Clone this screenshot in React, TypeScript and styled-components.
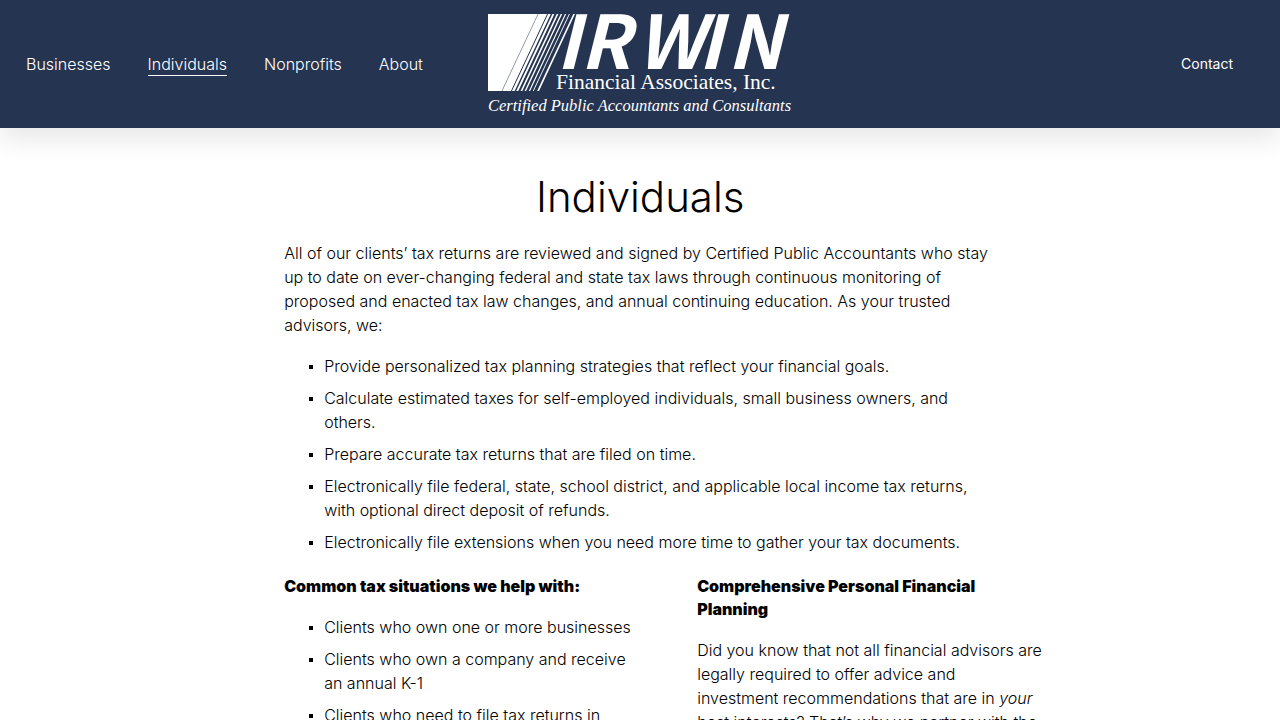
import React from "react";
import styled, { createGlobalStyle } from "styled-components";

const GlobalStyle = createGlobalStyle`
  * { box-sizing: border-box; }
  body {
    margin: 0;
    background: #fff;
    color: #000;
    font-family: Inter, "Liberation Sans", sans-serif;
    font-size: 16px;
    font-weight: 300;
    line-height: 24px;
  }
`;

const Header = styled.header`
  display: grid;
  grid-template-columns: 1fr auto 1fr;
  align-items: center;
  padding: 12px 26px;
  min-height: 128px;
  background: #253451;
  box-shadow: 0 12px 24px rgba(0, 0, 0, 0.09);
`;

const Nav = styled.nav`
  display: flex;
  gap: 37px;
`;

const NavLink = styled.a<{ $active?: boolean }>`
  color: #fff;
  text-decoration: none;
  line-height: 22px;
  border-bottom: 1px solid ${(p) => (p.$active ? "#fff" : "transparent")};
`;

const ContactLink = styled.a`
  justify-self: end;
  margin-right: 21px;
  color: #fff;
  font-size: 14px;
  font-weight: 400;
  line-height: 26px;
  text-decoration: none;
`;

const LogoLink = styled.a`
  display: block;
  svg {
    display: block;
    overflow: visible;
  }
`;

const Content = styled.main`
  max-width: 764px;
  margin-left: 22.2%;
  padding-top: 40px;
`;

const Intro = styled.section`
  max-width: 712px;
`;

const Title = styled.h1`
  margin: 0 0 16px;
  font-size: 42px;
  font-weight: 300;
  line-height: 57px;
  text-align: center;
`;

const Text = styled.p`
  margin: 0 0 17px;
`;

const List = styled.ul`
  margin: 0 0 21px;
  padding: 0 0 0 40px;
  list-style: none;
`;

const Item = styled.li`
  display: flex;
  margin-bottom: 8px;
  &::before {
    content: "";
    flex: none;
    width: 4px;
    height: 4px;
    margin: 11px 11px 0 -15px;
    background: #000;
  }
`;

const Columns = styled.div`
  display: grid;
  grid-template-columns: 1fr 1fr;
  gap: 62px;
`;

const Subheading = styled.h2`
  margin: 0 0 17px;
  font-size: 16px;
  font-weight: 900;
  line-height: 23px;
`;

const stripes = [
  { x: 102, w: 1 },
  { x: 121, w: 2 },
  { x: 129, w: 3 },
  { x: 137, w: 4 },
  { x: 145, w: 4 },
  { x: 153, w: 5 },
  { x: 161, w: 5 },
  { x: 169, w: 6 },
];

const Logo = () => (
  <svg width="306" height="104" viewBox="0 0 612 208" role="img" aria-label="Irwin Financial Associates, Inc.">
    <path d="M2 4H176L104 158H2Z" fill="#fff" />
    {stripes.map((s) => (
      <path key={s.x} d={`M${s.x + 2} 0L${s.x - 74} 162`} stroke="#253451" strokeWidth={s.w} />
    ))}
    <g fill="#fff">
      <text x="138 186 298 422 480" y="113" fontFamily="'Noto Sans CJK SC', sans-serif" fontSize="148" fontWeight="700" fontStyle="italic">IRWIN</text>
      <text x="138" y="154" fontFamily="'Liberation Serif', serif" fontSize="43">Financial Associates, Inc.</text>
      <text x="2" y="198" fontFamily="'Liberation Serif', serif" fontSize="33" fontStyle="italic">Certified Public Accountants and Consultants</text>
    </g>
  </svg>
);

const services = [
  "Provide personalized tax planning strategies that reflect your financial goals.",
  "Calculate estimated taxes for self-employed individuals, small business owners, and others.",
  "Prepare accurate tax returns that are filed on time.",
  "Electronically file federal, state, school district, and applicable local income tax returns, with optional direct deposit of refunds.",
  "Electronically file extensions when you need more time to gather your tax documents.",
];

const situations = [
  "Clients who own one or more businesses",
  "Clients who own a company and receive an annual K-1",
  "Clients who need to file tax returns in",
];

export default function App() {
  return (
    <>
      <GlobalStyle />
      <Header>
        <Nav aria-label="Main">
          <NavLink href="#businesses">Businesses</NavLink>
          <NavLink href="#individuals" $active aria-current="page">Individuals</NavLink>
          <NavLink href="#nonprofits">Nonprofits</NavLink>
          <NavLink href="#about">About</NavLink>
        </Nav>
        <LogoLink href="#home"><Logo /></LogoLink>
        <ContactLink href="#contact">Contact</ContactLink>
      </Header>
      <Content>
        <Intro>
          <Title>Individuals</Title>
          <Text>
            All of our clients’ tax returns are reviewed and signed by Certified Public Accountants who stay up to
            date on ever-changing federal and state tax laws through continuous monitoring of proposed and enacted
            tax law changes, and annual continuing education. As your trusted advisors, we:
          </Text>
          <List>{services.map((s) => <Item key={s}>{s}</Item>)}</List>
        </Intro>
        <Columns>
          <section>
            <Subheading>Common tax situations we help with:</Subheading>
            <List>{situations.map((s) => <Item key={s}>{s}</Item>)}</List>
          </section>
          <section>
            <Subheading>Comprehensive Personal Financial Planning</Subheading>
            <Text>
              Did you know that not all financial advisors are legally required to offer advice and
              <br />
              investment recommendations that are in <em>your</em> best interests? That’s why we partner with the
            </Text>
          </section>
        </Columns>
      </Content>
    </>
  );
}
